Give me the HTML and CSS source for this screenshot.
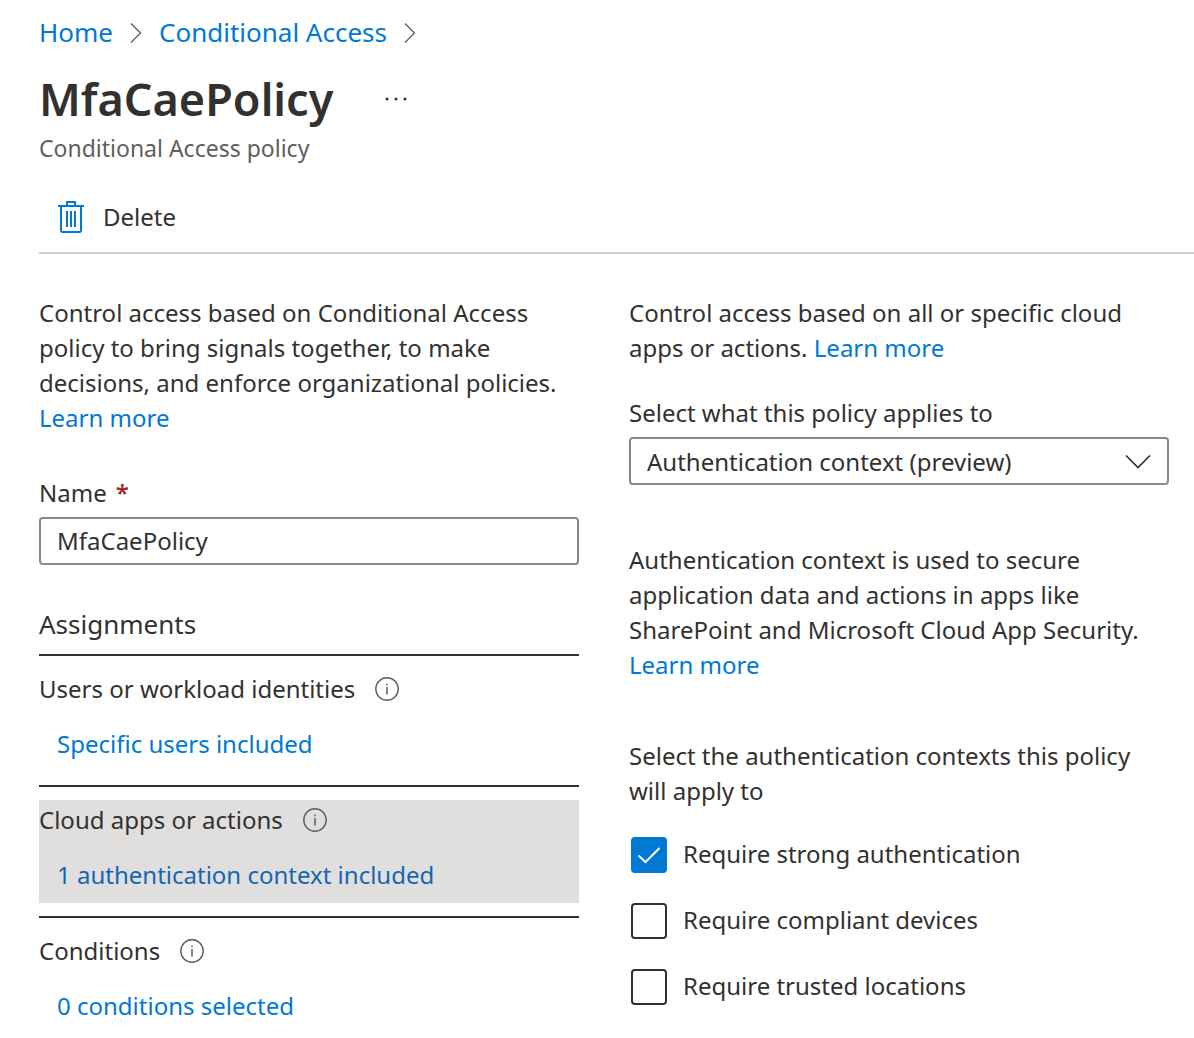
FILE: index.html
```html
<!DOCTYPE html>
<html lang="en">
<head>
<meta charset="utf-8">
<meta name="viewport" content="width=device-width, initial-scale=1">
<title>MfaCaePolicy - Conditional Access</title>
<link rel="stylesheet" href="styles.css">
</head>
<body>
<svg class="sprite" aria-hidden="true">
  <symbol id="info" viewBox="0 0 24 24">
    <circle cx="12" cy="12" r="11.2" fill="none" stroke="currentColor" stroke-width="1.4"/>
    <path d="M12 10v7.500M12 6.500v1.800" fill="none" stroke="currentColor" stroke-width="1.500"/>
  </symbol>
  <symbol id="chevron" viewBox="0 0 12 20">
    <path d="M1 0.500 10.500 10 1 19.500" fill="none" stroke="currentColor" stroke-width="1.300"/>
  </symbol>
</svg>
<header class="header">
  <nav class="breadcrumb" aria-label="Breadcrumb">
    <a href="#">Home</a>
    <svg class="separator" aria-hidden="true"><use href="#chevron"/></svg>
    <a href="#">Conditional Access</a>
    <svg class="separator" aria-hidden="true"><use href="#chevron"/></svg>
  </nav>
  <div class="title-row">
    <h1>MfaCaePolicy</h1>
    <button class="more" type="button" aria-label="More actions">
      <svg width="24" height="4" viewBox="0 0 24 4" fill="currentColor" aria-hidden="true"><circle cx="3" cy="2" r="1.500"/><circle cx="12" cy="2" r="1.500"/><circle cx="21" cy="2" r="1.500"/></svg>
    </button>
  </div>
  <p class="subtitle">Conditional Access policy</p>
</header>
<div class="toolbar">
  <button class="command" type="button">
    <svg width="26" height="32" viewBox="0 0 26 32" fill="none" stroke="currentColor" stroke-width="2" aria-hidden="true">
      <path d="M0 5h26M3 5v23.500q0 2.500 1.500 2.500h17q1.500 0 1.500-2.500V5M9 5V1h8v4M9 10v16M13 10v16M17 10v16"/>
    </svg>
    Delete
  </button>
</div>
<main class="columns">
  <div class="column">
    <p>Control access based on Conditional Access policy to bring signals together, to make decisions, and enforce organizational policies. <a href="#">Learn more</a></p>
    <div class="field name-field">
      <label for="name">Name<span class="required">*</span></label>
      <input class="box" id="name" type="text" value="MfaCaePolicy" required>
    </div>
    <h2>Assignments</h2>
    <section class="assignment">
      <div class="panel">
        <h3>Users or workload identities <svg class="info" aria-hidden="true"><use href="#info"/></svg></h3>
        <a href="#">Specific users included</a>
      </div>
    </section>
    <section class="assignment">
      <div class="panel selected">
        <h3>Cloud apps or actions <svg class="info" aria-hidden="true"><use href="#info"/></svg></h3>
        <a href="#">1 authentication context included</a>
      </div>
    </section>
    <section class="assignment">
      <div class="panel">
        <h3>Conditions <svg class="info" aria-hidden="true"><use href="#info"/></svg></h3>
        <a href="#">0 conditions selected</a>
      </div>
    </section>
  </div>
  <div class="column">
    <p>Control access based on all or specific cloud apps or actions. <a href="#">Learn more</a></p>
    <div class="field applies-field">
      <label for="applies">Select what this policy applies to</label>
      <div class="select">
        <select class="box" id="applies"><option>Authentication context (preview)</option></select>
        <svg class="arrow" width="28" height="16" viewBox="0 0 28 16" fill="none" stroke="currentColor" stroke-width="1.700" aria-hidden="true"><path d="M2 1.500 14 13.500 26 1.500"/></svg>
      </div>
    </div>
    <p class="context-note">Authentication context is used to secure application data and actions in apps like SharePoint and Microsoft Cloud App Security. <a href="#">Learn more</a></p>
    <fieldset class="contexts">
      <legend>Select the authentication contexts this policy will apply to</legend>
      <div class="options">
        <label class="option"><span class="tick"><input type="checkbox" checked><svg width="24" height="18" viewBox="0 0 24 18" aria-hidden="true"><path d="M1.500 9.500 8.500 16 22.500 2"/></svg></span><span class="option-text">Require strong authentication</span></label>
        <label class="option"><span class="tick"><input type="checkbox"></span><span class="option-text">Require compliant devices</span></label>
        <label class="option"><span class="tick"><input type="checkbox"></span><span class="option-text">Require trusted locations</span></label>
      </div>
    </fieldset>
  </div>
</main>
</body>
</html>
```

FILE: styles.css
```css
* { box-sizing: border-box; }

body {
  margin: 0;
  padding: 15px 0 16px 39px;
  background: #fff;
  color: #323130;
  font: 24px/35px "Noto Sans", "Open Sans", sans-serif;
}

h1, h2, h3, p { margin: 0; font-weight: 400; }
h3 { font-size: 24px; }
a { color: #0078d4; text-decoration: none; }
button, input, select { color: inherit; font: inherit; }
button { padding: 0; border: 0; background: none; cursor: pointer; }
.sprite { display: none; }

.breadcrumb { display: flex; align-items: center; gap: 17px; font-size: 26px; }
.separator { width: 12px; height: 20px; color: #605e5c; }

.title-row { display: flex; align-items: center; gap: 51px; margin-top: 17px; }
h1 { font-size: 45px; font-weight: 600; line-height: 64px; }
.more { display: flex; }
.subtitle { color: #605e5c; font-size: 23px; line-height: 34px; }

.toolbar { margin-top: 34px; padding: 0 19px 18px; border-bottom: 2px solid #d2d0ce; }
.command { display: flex; align-items: center; gap: 19px; }
.command svg { color: #0078d4; }

.columns {
  display: grid;
  grid-template-columns: 1fr 1fr;
  gap: 50px;
  padding: 41px 25px 0 0;
}

.field { display: grid; gap: 7px; }
.name-field { margin-top: 40px; }
.applies-field { margin-top: 30px; }
.required { margin-left: 9px; color: #a4262c; font-weight: 600; }

.box {
  width: 100%;
  height: 48px;
  padding: 0 16px 2px;
  border: 2px solid #8a8886;
  border-radius: 4px;
  background: #fff;
}
.select { position: relative; }
.select .box { appearance: none; padding-bottom: 0; }
.arrow { position: absolute; top: 17px; right: 17px; pointer-events: none; }

h2 { margin: 42px 0 12px; font-size: 26px; }
.assignment { padding: 13px 0; border-top: 2px solid #323130; }
.panel { display: grid; gap: 20px; padding: 2px 0 11px; }
.panel h3 { display: flex; align-items: center; gap: 20px; }
.panel a { margin-left: 18px; }
.info { width: 24px; height: 24px; color: #605e5c; }
.selected { background: #e1dfdd; }
.selected a { color: #1267b4; }

.context-note { margin-top: 57px; }
.contexts { margin: 56px 0 0; padding: 0; border: 0; }
.contexts legend { padding: 0; }
.options { display: grid; gap: 30px; padding: 29px 2px 0; }
.option { display: flex; align-items: center; gap: 16px; }
.option-text { padding-bottom: 2px; line-height: 34px; }
.tick { display: grid; place-items: center; }
.tick > * { grid-area: 1 / 1; }
.tick input {
  appearance: none;
  width: 36px;
  height: 36px;
  margin: 0;
  border: 2px solid #323130;
  border-radius: 4px;
}
.tick input:checked { border-color: #0078d4; background: #0078d4; }
.tick svg { z-index: 1; fill: none; stroke: #fff; stroke-width: 2; pointer-events: none; }
```
